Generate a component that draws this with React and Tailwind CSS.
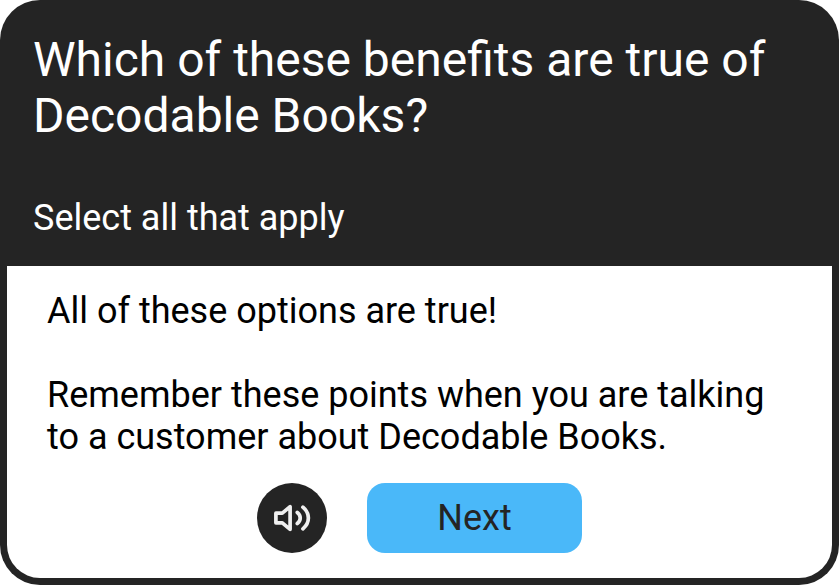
export default function App() {
  return (
    <main className="flex min-h-screen flex-col rounded-[40px] bg-[#242424] px-[7px] pb-[7px] font-[Roboto,sans-serif] text-black">
      <header className="px-[26px] pt-8 pb-[27px] text-white">
        <h1 className="text-[48px] leading-[56px]">Which of these benefits are true of Decodable Books?</h1>
        <p className="mt-[53px] text-[36px] leading-[42px]">Select all that apply</p>
      </header>
      <section className="flex flex-1 flex-col rounded-b-[33px] bg-white px-10 pt-6 pb-[25px] text-[36px] leading-[42px]">
        <p>All of these options are true!</p>
        <p className="mt-[42px]">Remember these points when you are talking to a customer about Decodable Books.</p>
        <div className="mt-[25px] flex justify-center gap-10">
          <button type="button" aria-label="Read aloud" className="flex size-[70px] items-center justify-center rounded-full bg-[#242424] text-[#f0f0f0]">
            <svg viewBox="0 0 40 32" className="h-8 w-10" fill="none" stroke="currentColor" strokeWidth="3.7" strokeLinecap="round" strokeLinejoin="round">
              <path d="M3.9 11.2H10.3L18.1 4.7V27.3L10.3 20.8H3.9Z" />
              <path d="M25.3 10.5C29.2 13.5 29.2 18.5 25.3 21.5M30.9 5.2C38.2 11.5 38.2 20.5 30.9 26.8" />
            </svg>
          </button>
          <button type="button" className="h-[70px] w-[215px] rounded-[18px] bg-[#4ab8f9] text-[#242424]">Next</button>
        </div>
      </section>
    </main>
  );
}
